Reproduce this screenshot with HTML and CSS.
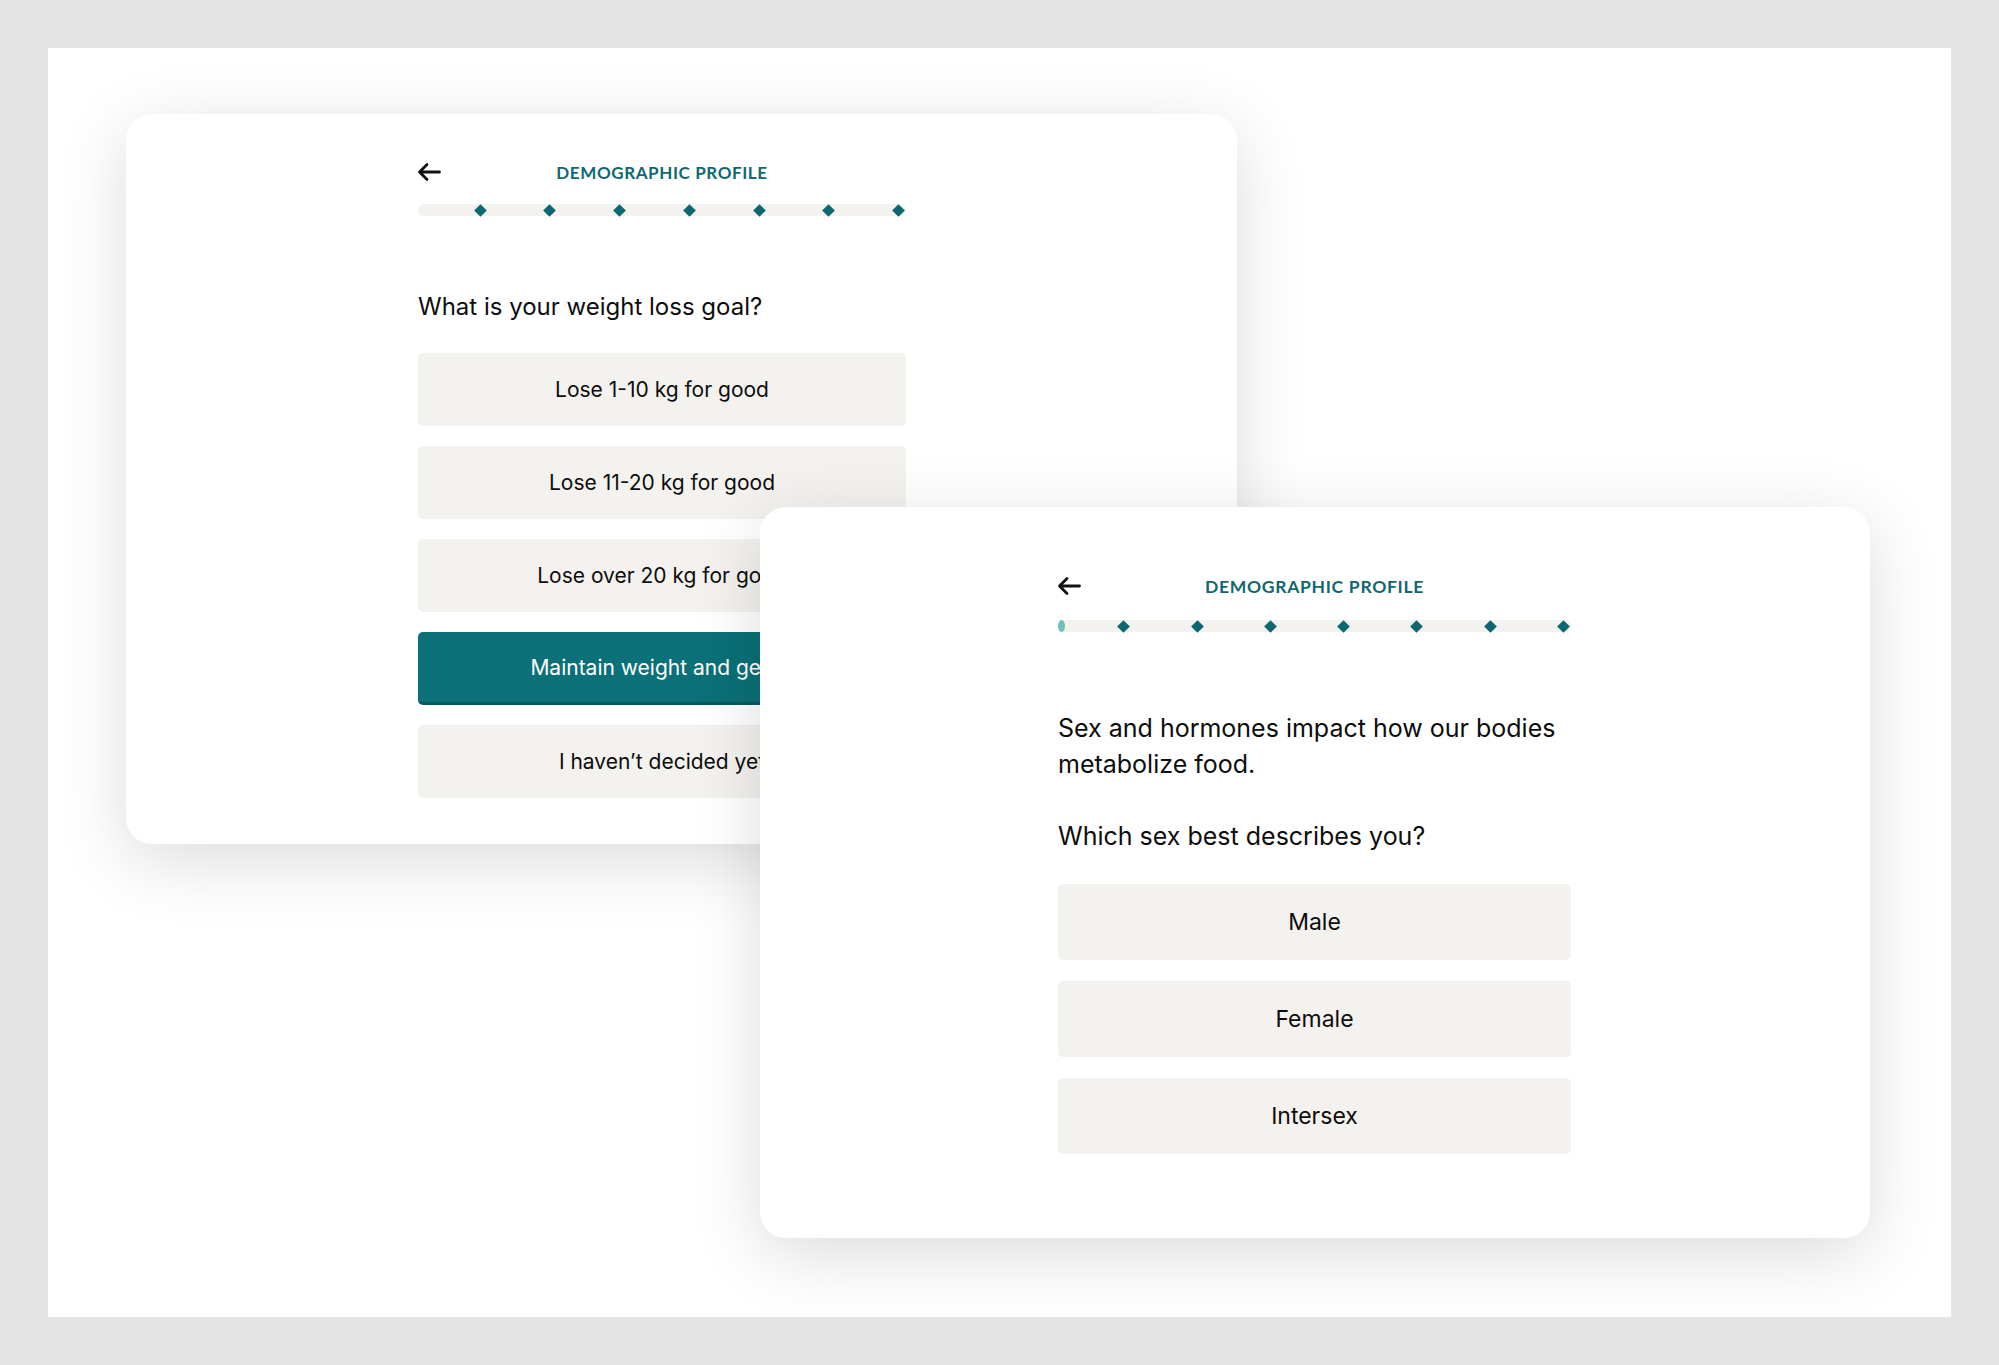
FILE: index.html
```html
<!DOCTYPE html>
<html lang="en">
<head>
    <meta charset="UTF-8">
    <meta name="viewport" content="width=device-width, initial-scale=1.0">
    <title>Demographic Profile</title>
    <link rel="stylesheet" href="styles.css">
</head>
<body>
    <div class="frame">

        <!-- weight goal step -->
        <div class="card card-goal">
            <div class="column">
                <div class="header">
                    <svg class="back" viewBox="0 0 24 20" width="24" height="20">
                        <path d="M22.5 10H3 M10 2.5L2.5 10l7.5 7.5" fill="none" stroke="#111" stroke-width="2.8" stroke-linecap="round" stroke-linejoin="round"/>
                    </svg>
                    <div class="title">DEMOGRAPHIC PROFILE</div>
                </div>
                <div class="progress">
                    <span class="step"><i></i></span>
                    <span class="step"><i></i></span>
                    <span class="step"><i></i></span>
                    <span class="step"><i></i></span>
                    <span class="step"><i></i></span>
                    <span class="step"><i></i></span>
                    <span class="step"><i></i></span>
                </div>
                <p class="question">What is your weight loss goal?</p>
                <div class="options">
                    <button class="option">Lose 1-10 kg for good</button>
                    <button class="option">Lose 11-20 kg for good</button>
                    <button class="option">Lose over 20 kg for good</button>
                    <button class="option selected">Maintain weight and get fit</button>
                    <button class="option">I haven’t decided yet</button>
                </div>
            </div>
        </div>

        <!-- sex step -->
        <div class="card card-sex">
            <div class="column">
                <div class="header">
                    <svg class="back" viewBox="0 0 24 20" width="24" height="20">
                        <path d="M22.5 10H3 M10 2.5L2.5 10l7.5 7.5" fill="none" stroke="#111" stroke-width="2.8" stroke-linecap="round" stroke-linejoin="round"/>
                    </svg>
                    <div class="title">DEMOGRAPHIC PROFILE</div>
                </div>
                <div class="progress">
                    <span class="fill"></span>
                    <span class="step"><i></i></span>
                    <span class="step"><i></i></span>
                    <span class="step"><i></i></span>
                    <span class="step"><i></i></span>
                    <span class="step"><i></i></span>
                    <span class="step"><i></i></span>
                    <span class="step"><i></i></span>
                </div>
                <p class="intro">Sex and hormones impact how our bodies metabolize food.</p>
                <p class="question">Which sex best describes you?</p>
                <div class="options">
                    <button class="option">Male</button>
                    <button class="option">Female</button>
                    <button class="option">Intersex</button>
                </div>
            </div>
        </div>

    </div>
</body>
</html>
```

FILE: styles.css
```css
body {
    margin: 0;
    background-color: #e4e4e4;
    font-family: Inter, "Noto Sans", sans-serif;
    color: #0d0d0d;
}

.frame {
    position: relative;
    margin: 48px;
    height: 1269px;
    background-color: #fff;
    overflow: hidden;
}

/* cards float on the canvas */
.card {
    position: absolute;
    box-sizing: border-box;
    background-color: #fff;
    border-radius: 26px;
    box-shadow: 0 16px 70px rgba(0, 0, 0, 0.14);
}

.card-goal {
    left: 78px;
    top: 66px;
    width: 1111px;
    padding: 46px 0 46px 292px;
}

.card-sex {
    left: 712px;
    top: 459px;
    width: 1110px;
    padding: 67px 0 84px 298px;
    z-index: 2;
}

.card-goal .column {
    width: 488px;
}

.card-sex .column {
    width: 513px;
}

.header {
    display: grid;
    grid-template-columns: 1fr auto 1fr;
    align-items: center;
    height: 24px;
}

.back {
    display: block;
    margin-left: -1px;
}

.title {
    font-family: Lato, "Noto Sans", sans-serif;
    font-weight: 700;
    font-size: 17px;
    letter-spacing: 0.6px;
    color: #0f6870;
}

.card-sex .title {
    font-size: 17.5px;
    letter-spacing: 0.7px;
}

.progress {
    position: relative;
    display: flex;
    height: 12px;
    margin-top: 20px;
    border-radius: 6px;
    background-color: #f3f2ee;
}

.card-sex .progress {
    margin-top: 22px;
}

.progress .fill {
    position: absolute;
    left: 0;
    top: 0;
    width: 7px;
    height: 12px;
    border-radius: 50%;
    background-color: #6cc0b8;
}

.step {
    flex: 1;
    display: flex;
    justify-content: flex-end;
    align-items: center;
}

.step i {
    width: 9px;
    height: 9px;
    margin-right: 3px;
    background-color: #0b6870;
    transform: rotate(45deg);
}

.question {
    margin: 75px 0 30px;
    font-size: 24px;
    line-height: 32px;
}

.intro {
    margin: 78px 0 0;
    font-size: 25px;
    line-height: 36px;
}

.card-sex .question {
    margin: 36px 0 30px;
    font-size: 25px;
    line-height: 36px;
}

.options {
    display: flex;
    flex-direction: column;
    gap: 20px;
}

.option {
    height: 73px;
    padding: 0;
    border: none;
    border-radius: 5px;
    background-color: #f3f2ee;
    font-family: inherit;
    font-size: 21px;
    color: #0d0d0d;
    white-space: nowrap;
    cursor: pointer;
}

.card-sex .options {
    gap: 21px;
}

.card-sex .option {
    height: 76px;
    font-size: 23px;
}

.option.selected {
    background-color: #0b7077;
    border-bottom: 3px solid #075a60;
    color: #fff;
}
```
